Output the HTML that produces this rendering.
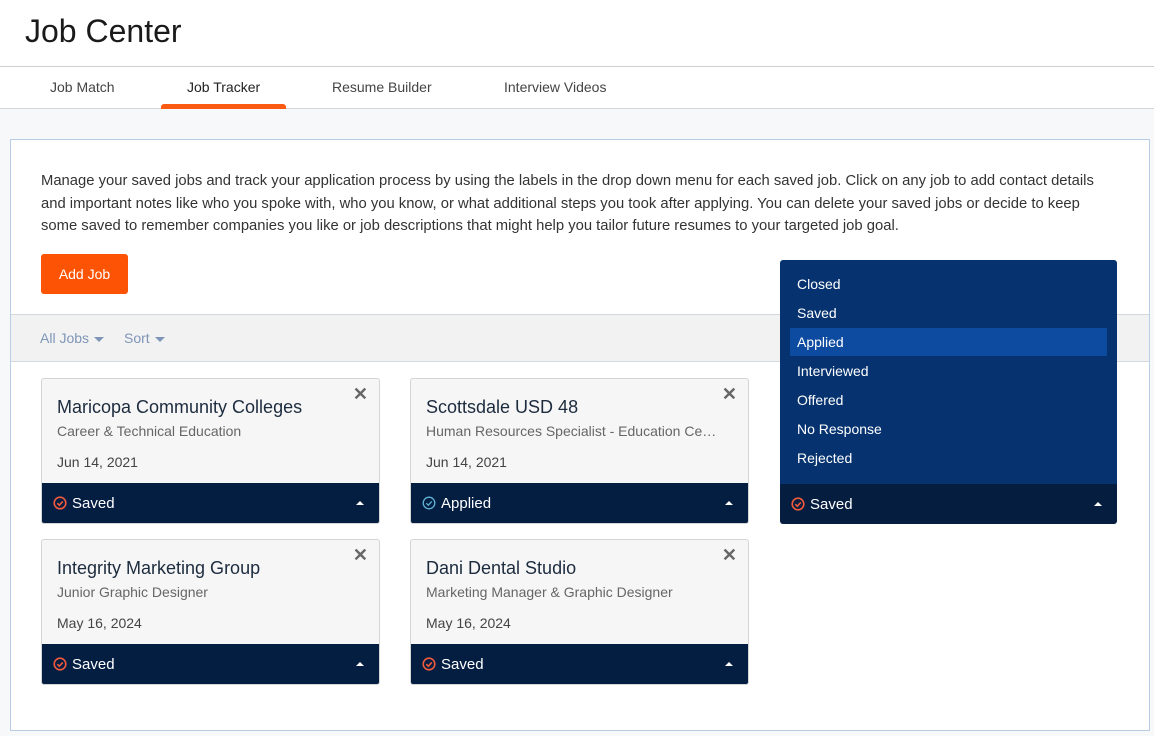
<!DOCTYPE html>
<html><head><style>
*{box-sizing:border-box;margin:0;padding:0}
body{width:1154px;height:736px;background:#f7f8fa;font-family:"Liberation Sans",Arial,sans-serif;position:relative;overflow:hidden;color:#222}
.a{position:absolute}
.hdr{left:0;top:0;width:1154px;height:67px;background:#fff;border-bottom:1px solid #cfcfcf}
.hdr h1{position:absolute;left:25px;top:13px;font-size:32px;font-weight:normal;color:#1a1a1a}
.tabs{left:0;top:67px;width:1154px;height:42px;background:#fff;border-bottom:1px solid #d5d5d5}
.tab{position:absolute;top:12px;font-size:14px;color:#444}
.ul{left:161px;top:104px;width:125px;height:5px;background:#fb5a12;border-radius:3px 3px 0 0}
.panel{left:10px;top:139px;width:1140px;height:592px;background:#fff;border:1px solid #b9cde4}
.desc{left:41px;top:170px;width:1072px;font-size:14.8px;line-height:22.5px;color:#333}
.btn{left:41px;top:254px;width:87px;height:40px;background:#fc5305;border-radius:3px;color:#fff;font-size:14px;line-height:40px;text-align:center}
.bar{left:11px;top:314px;width:1138px;height:48px;background:#f2f2f2;border-top:1px solid #d4d9e0;border-bottom:1px solid #d4d9e0}
.flt{position:absolute;top:15px;font-size:14px;color:#7f95b8}
.car{display:inline-block;width:0;height:0;border-left:5px solid transparent;border-right:5px solid transparent;border-top:5px solid #7f95b8;vertical-align:middle;margin-left:5px}
.card{position:absolute;width:339px;height:146px;background:#f6f6f6;border:1px solid #d4d4d4;border-radius:3px;overflow:hidden}
.card h3{position:absolute;left:15px;top:18px;font-size:18px;font-weight:normal;color:#1c2b3e}
.card .s{position:absolute;left:15px;top:44px;font-size:14px;color:#666;white-space:nowrap;width:295px;overflow:hidden;text-overflow:ellipsis}
.card .d{position:absolute;left:15px;top:75px;font-size:14px;color:#444}
.card .x{position:absolute;right:11px;top:5px;font-size:18px;color:#666;font-weight:bold}
.ft{position:absolute;left:0;bottom:0;width:100%;height:40px;background:#041e42;color:#fff;font-size:15px}
.ft span{position:absolute;left:30px;top:12px}
.ft svg{position:absolute;left:11px;top:13px}
.up{position:absolute;right:15px;top:18px;width:0;height:0;border-left:4px solid transparent;border-right:4px solid transparent;border-bottom:4px solid #fff}
.menu{left:780px;top:260px;width:337px;height:224px;background:#063370;border-radius:3px 3px 0 0}
.mi{position:absolute;left:17px;font-size:14px;color:#fff}
.hl{position:absolute;left:10px;top:68px;width:317px;height:28px;background:#0c4ba0}
</style></head><body>
<div class="a hdr"><h1>Job Center</h1></div>
<div class="a tabs">
<span class="tab" style="left:50px">Job Match</span>
<span class="tab" style="left:187px;color:#222">Job Tracker</span>
<span class="tab" style="left:332px">Resume Builder</span>
<span class="tab" style="left:504px">Interview Videos</span>
</div>
<div class="a ul"></div>
<div class="a panel"></div>
<div class="a desc">Manage your saved jobs and track your application process by using the labels in the drop down menu for each saved job. Click on any job to add contact details and important notes like who you spoke with, who you know, or what additional steps you took after applying. You can delete your saved jobs or decide to keep some saved to remember companies you like or job descriptions that might help you tailor future resumes to your targeted job goal.</div>
<div class="a btn">Add Job</div>
<div class="a bar"><span class="flt" style="left:29px">All Jobs<i class="car"></i></span><span class="flt" style="left:113px">Sort<i class="car"></i></span></div>

<div class="card" style="left:41px;top:378px"><h3>Maricopa Community Colleges</h3><div class="s">Career &amp; Technical Education</div><div class="d">Jun 14, 2021</div><div class="x">✕</div>
<div class="ft"><svg width="14" height="14" viewBox="0 0 14 14"><circle cx="7" cy="7" r="5.8" fill="none" stroke="#f05a3c" stroke-width="1.6"/><path d="M4.3 7.2l2 2 3.5-3.8" fill="none" stroke="#f05a3c" stroke-width="1.6"/></svg><span>Saved</span><i class="up"></i></div></div>
<div class="card" style="left:410px;top:378px"><h3>Scottsdale USD 48</h3><div class="s">Human Resources Specialist - Education Center</div><div class="d">Jun 14, 2021</div><div class="x">✕</div>
<div class="ft"><svg width="14" height="14" viewBox="0 0 14 14"><circle cx="7" cy="7" r="5.8" fill="none" stroke="#5fb4d6" stroke-width="1.3"/><path d="M4.3 7.2l2 2 3.5-3.8" fill="none" stroke="#5fb4d6" stroke-width="1.3"/></svg><span>Applied</span><i class="up"></i></div></div>
<div class="card" style="left:780px;top:378px;width:337px;border:none"><div class="ft" style="background:#051d3f"><svg width="14" height="14" viewBox="0 0 14 14"><circle cx="7" cy="7" r="5.8" fill="none" stroke="#f05a3c" stroke-width="1.6"/><path d="M4.3 7.2l2 2 3.5-3.8" fill="none" stroke="#f05a3c" stroke-width="1.6"/></svg><span>Saved</span><i class="up"></i></div></div>
<div class="card" style="left:41px;top:539px"><h3>Integrity Marketing Group</h3><div class="s">Junior Graphic Designer</div><div class="d">May 16, 2024</div><div class="x">✕</div>
<div class="ft"><svg width="14" height="14" viewBox="0 0 14 14"><circle cx="7" cy="7" r="5.8" fill="none" stroke="#f05a3c" stroke-width="1.6"/><path d="M4.3 7.2l2 2 3.5-3.8" fill="none" stroke="#f05a3c" stroke-width="1.6"/></svg><span>Saved</span><i class="up"></i></div></div>
<div class="card" style="left:410px;top:539px"><h3>Dani Dental Studio</h3><div class="s">Marketing Manager &amp; Graphic Designer</div><div class="d">May 16, 2024</div><div class="x">✕</div>
<div class="ft"><svg width="14" height="14" viewBox="0 0 14 14"><circle cx="7" cy="7" r="5.8" fill="none" stroke="#f05a3c" stroke-width="1.6"/><path d="M4.3 7.2l2 2 3.5-3.8" fill="none" stroke="#f05a3c" stroke-width="1.6"/></svg><span>Saved</span><i class="up"></i></div></div>

<div class="a menu">
<div class="hl"></div>
<span class="mi" style="top:16px">Closed</span>
<span class="mi" style="top:45px">Saved</span>
<span class="mi" style="top:74px">Applied</span>
<span class="mi" style="top:103px">Interviewed</span>
<span class="mi" style="top:132px">Offered</span>
<span class="mi" style="top:161px">No Response</span>
<span class="mi" style="top:190px">Rejected</span>
</div>
</body></html>
